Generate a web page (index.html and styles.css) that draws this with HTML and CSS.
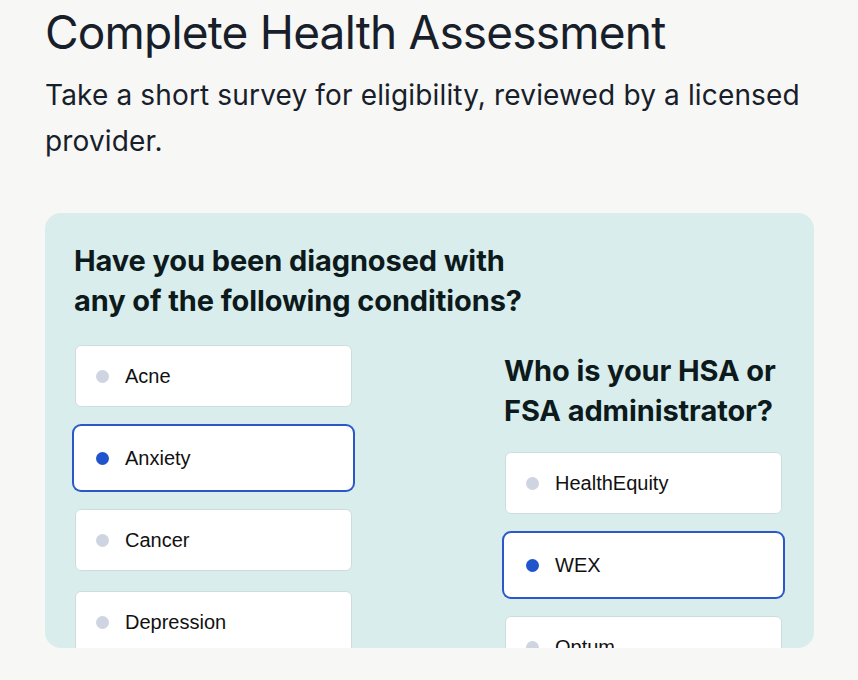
FILE: index.html
```html
<!DOCTYPE html>
<html lang="en">
<head>
<meta charset="utf-8">
<title>Complete Health Assessment</title>
<link rel="stylesheet" href="styles.css">
</head>
<body>
<main class="page">
  <h1 class="title">Complete Health Assessment</h1>
  <p class="lead">Take a short survey for eligibility, reviewed by a licensed provider.</p>
  <section class="card">
    <div class="col col-left">
      <h2 class="q">Have you been diagnosed with any of the following conditions?</h2>
      <ul class="opts">
        <li class="opt"><span class="dot"></span>Acne</li>
        <li class="opt sel"><span class="dot"></span>Anxiety</li>
        <li class="opt"><span class="dot"></span>Cancer</li>
        <li class="opt"><span class="dot"></span>Depression</li>
      </ul>
    </div>
    <div class="col col-right">
      <h2 class="q">Who is your HSA or FSA administrator?</h2>
      <ul class="opts">
        <li class="opt"><span class="dot"></span>HealthEquity</li>
        <li class="opt sel"><span class="dot"></span>WEX</li>
        <li class="opt"><span class="dot"></span>Optum</li>
      </ul>
    </div>
  </section>
</main>
</body>
</html>
```

FILE: styles.css
```css
html, body {
  margin: 0;
  padding: 0;
  background: #f7f7f5;
}
body {
  font-family: Inter, "Liberation Sans", Arial, sans-serif;
  color: #15202b;
}
.page {
  padding: 0 44px 0 45px;
}
.title {
  margin: 0;
  padding-top: 4px;
  font-size: 46px;
  line-height: 56px;
  font-weight: 400;
  letter-spacing: -0.8px;
  color: #17202a;
}
.lead {
  margin: 12px 0 0;
  font-size: 28px;
  line-height: 46px;
  font-weight: 400;
  letter-spacing: 0.15px;
  color: #17202a;
  max-width: 770px;
}
.card {
  margin-top: 49px;
  height: 435px;
  background: #d9eded;
  border-radius: 16px;
  overflow: hidden;
  display: flex;
  gap: 151px;
  padding: 0 31px 0 29px;
}
.col {
  flex: 0 0 279px;
  display: flex;
  flex-direction: column;
}
.col-left {
  padding-top: 28px;
}
.col-right {
  padding-top: 138px;
}
.q {
  margin: 0;
  font-family: Inter, "Liberation Sans", sans-serif;
  font-size: 29px;
  line-height: 40px;
  font-weight: 700;
  letter-spacing: -0.1px;
  color: #0d1a1c;
}
.col-left .q { margin-right: -190px; }
.col-right .q { margin-right: -30px; }
.opts {
  list-style: none;
  margin: 24px 0 0;
  padding: 0;
  display: flex;
  flex-direction: column;
  gap: 20px;
}
.col-right .opts { margin-top: 21px; }
.opt {
  box-sizing: border-box;
  height: 62px;
  margin: 0 1px;
  display: flex;
  align-items: center;
  gap: 16px;
  padding: 0 20px;
  background: #fff;
  border: 1px solid #cfdcdf;
  border-radius: 6px;
  font-family: "Liberation Sans", Arial, sans-serif;
  font-size: 20px;
  color: #111;
  flex: none;
}
.opt.sel {
  border-color: #fff;
  box-shadow: 0 0 0 1px #fff, 0 0 0 3px #2b58c9;
}
.dot {
  width: 13px;
  height: 13px;
  border-radius: 50%;
  background: #cfd4e1;
  flex: none;
}
.sel .dot { background: #2054cc; }
```
